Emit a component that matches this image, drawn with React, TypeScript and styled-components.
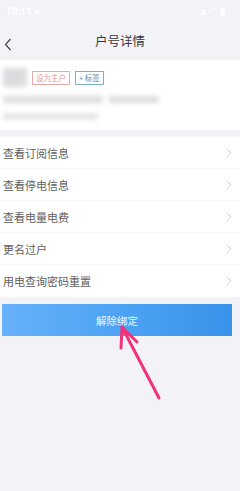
import React from "react";
import styled, { createGlobalStyle } from "styled-components";

const Global = createGlobalStyle`
  html, body { margin: 0; padding: 0; background: #f3f3f7; }
  body { font-family: "Noto Sans CJK SC", "Noto Sans", sans-serif; }
`;

const Page = styled.div`
  position: relative;
  width: 240px;
  height: 491px;
  background: #f3f3f7;
  overflow: hidden;
`;

const StatusBar = styled.div`
  height: 22px;
  display: flex;
  align-items: center;
  justify-content: space-between;
  padding: 0 14px 0 6px;
  color: #ffffff;
  font-family: "Roboto", sans-serif;
  font-size: 10px;
  font-weight: 700;
`;

const NavBar = styled.div`
  height: 36px;
  display: flex;
  align-items: center;
  position: relative;
`;

const Back = styled.div`
  position: absolute;
  left: 4px;
  top: 10px;
  width: 12px;
  height: 14px;
`;

const Title = styled.div`
  flex: 1;
  text-align: center;
  font-size: 12.5px;
  color: #383838;
`;

const Card = styled.div`
  margin-top: 2px;
  background: #fff;
  height: 70px;
  padding: 8px 3px 0;
  box-sizing: border-box;
`;

const TopRow = styled.div`
  display: flex;
  align-items: center;
  gap: 5px;
`;

const Blur = styled.div<{ $w: number; $h: number }>`
  width: ${(p) => p.$w}px;
  height: ${(p) => p.$h}px;
  background: #dcdcde;
  filter: blur(2.5px);
  border-radius: 2px;
`;

const Tag = styled.div<{ $c: string; $b: string }>`
  height: 12px;
  padding: 0 3px;
  border: 1px solid ${(p) => p.$b};
  color: ${(p) => p.$c};
  font-size: 7.5px;
  line-height: 12px;
  display: flex;
  align-items: center;
`;

const BlurLines = styled.div`
  margin-top: 9px;
  display: flex;
  flex-direction: column;
  gap: 11px;
`;

const LineRow = styled.div`
  display: flex;
  gap: 6px;
`;

const List = styled.div`
  margin-top: 7px;
  background: #fff;
`;

const Row = styled.div`
  height: 32px;
  display: flex;
  align-items: center;
  justify-content: space-between;
  padding: 0 8px 0 3px;
  border-bottom: 1px solid #f4f4f6;
  box-sizing: border-box;
  font-size: 11px;
  color: #5e5e5e;
  &:last-child { border-bottom: none; }
`;

const Button = styled.div`
  margin: 7px 8px 0 2px;
  height: 32px;
  background: linear-gradient(90deg, #68b1fb 0%, #4ea3f4 50%, #3992ea 100%);
  display: flex;
  align-items: center;
  justify-content: center;
  color: #f4f9ff;
  font-size: 10.5px;
`;

const Arrow = styled.svg`
  position: absolute;
  left: 110px;
  top: 322px;
`;

const Chevron = () => (
  <svg width="6" height="10" viewBox="0 0 6 10">
    <path d="M1 1 L5 5 L1 9" fill="none" stroke="#cfcfd3" strokeWidth="1" />
  </svg>
);

const items = ["查看订阅信息", "查看停电信息", "查看电量电费", "更名过户", "用电查询密码重置"];

export default function App() {
  return (
    <Page>
      <Global />
      <StatusBar>
        <span>10:11 ◂</span>
        <span>▴ ◠ ▮</span>
      </StatusBar>
      <NavBar>
        <Back>
          <svg width="8" height="13" viewBox="0 0 8 13">
            <path d="M6.5 1 L1.5 6.5 L6.5 12" fill="none" stroke="#444" strokeWidth="1.2" />
          </svg>
        </Back>
        <Title>户号详情</Title>
      </NavBar>
      <Card>
        <TopRow>
          <Blur $w={24} $h={19} />
          <Tag $c="#e29a92" $b="#e8aaa4">设为主户</Tag>
          <Tag $c="#5a8fa8" $b="#7fb0c4">+ 标签</Tag>
        </TopRow>
        <BlurLines>
          <LineRow>
            <Blur $w={100} $h={7} />
            <Blur $w={50} $h={7} />
          </LineRow>
          <LineRow>
            <Blur $w={95} $h={5} />
          </LineRow>
        </BlurLines>
      </Card>
      <List>
        {items.map((t) => (
          <Row key={t}>
            <span>{t}</span>
            <Chevron />
          </Row>
        ))}
      </List>
      <Button>解除绑定</Button>
      <Arrow width="60" height="80" viewBox="0 0 60 80">
        <path d="M12 5 L49 76" fill="none" stroke="#f0327a" strokeWidth="3" strokeLinecap="round" />
        <path d="M12 5 L11 26 M12 5 L27 20" fill="none" stroke="#f0327a" strokeWidth="3" strokeLinecap="round" />
      </Arrow>
    </Page>
  );
}
